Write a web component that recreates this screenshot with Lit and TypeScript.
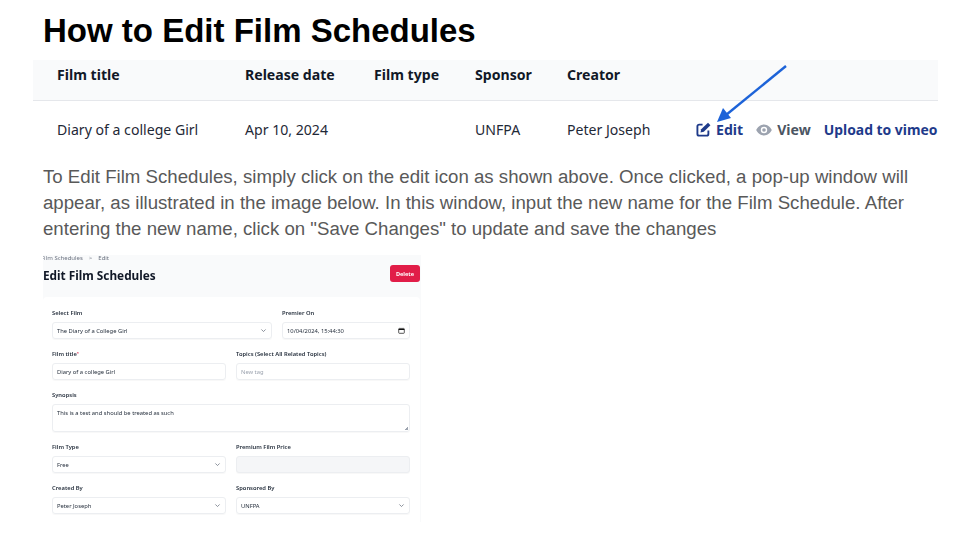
import { LitElement, html, css, svg } from "lit";
import { customElement } from "lit/decorators.js";

const chevron = svg`<svg viewBox="0 0 10 10" width="7" height="7"><path d="M2 3.500 5 6.500 8 3.500" fill="none" stroke="#6b7280" stroke-width="1.100"/></svg>`;

@customElement("app-root")
export class AppRoot extends LitElement {
  static styles = css`
    :host {
      display: block;
      position: relative;
      width: 960px;
      height: 540px;
      background: #fff;
      overflow: hidden;
      font-family: "Liberation Sans", Arial, sans-serif;
    }
    .slide {
      display: flex;
      flex-direction: column;
      padding: 11px 22px 0 33px;
    }
    h1 {
      margin: 0 0 0 10px;
      height: 49px;
      font-size: 33px;
      line-height: 40px;
      font-weight: 700;
      color: #000;
    }
    .table {
      font-family: "Noto Sans", sans-serif;
      font-size: 14.1px;
      color: #1f2937;
    }
    .cols {
      display: grid;
      grid-template-columns: 188px 129px 101px 92px 129px 1fr;
      padding-left: 24px;
      align-items: center;
    }
    .head {
      height: 41px;
      padding-bottom: 12px;
      box-sizing: border-box;
      background: #f9fafb;
      border-bottom: 1px solid #e5e7eb;
      font-weight: 700;
      color: #111827;
    }
    .row {
      height: 58px;
      padding-bottom: 1px;
      box-sizing: border-box;
    }
    .actions {
      display: flex;
      align-items: center;
      font-weight: 700;
      white-space: nowrap;
    }
    .edit, .upload { color: #1e3a8a; }
    .upload { font-size: 13.9px; }
    .view { color: #4b5563; }
    .edit, .view { display: flex; align-items: center; gap: 5px; }
    .edit { margin-right: 13px; }
    .view { margin-right: 13px; }
    p {
      margin: 5px 0 0 10px;
      width: 880px;
      font-size: 18.65px;
      line-height: 26px;
      color: #595959;
    }
    .shot {
      margin: 13px 0 0 10px;
      width: 378px;
      height: 267px;
      overflow: hidden;
      background: #f9fafb;
      font-family: "Noto Sans", sans-serif;
      color: #1f2937;
      display: flex;
      flex-direction: column;
      filter: blur(0.3px);
    }
    .crumbs {
      font-size: 6px;
      line-height: 8px;
      color: #6b7280;
      display: flex;
      gap: 6px;
      margin: -1px 0 0 -2px;
      white-space: nowrap;
    }
    .shot-head {
      display: flex;
      justify-content: space-between;
      align-items: center;
      padding-right: 1px;
      height: 26px;
    }
    .shot-head b {
      font-size: 11.8px;
      color: #111827;
    }
    .delete {
      width: 30px;
      height: 17px;
      margin-top: -3px;
      border-radius: 3px;
      background: #e11d48;
      color: #fff;
      font-size: 5.6px;
      font-weight: 700;
      display: flex;
      align-items: center;
      justify-content: center;
    }
    .card {
      margin: 9px 1px 0 0;
      flex: 1;
      background: #fff;
      border-radius: 4px 4px 0 0;
      padding: 12px 10px 0 9px;
      display: flex;
      flex-direction: column;
      gap: 11px;
    }
    .line { display: grid; grid-template-columns: 174px 1fr; gap: 10px; }
    .line.first { grid-template-columns: 220px 1fr; }
    .field { display: flex; flex-direction: column; gap: 5px; }
    label {
      font-size: 5.8px;
      line-height: 8px;
      font-weight: 600;
      color: #1f2937;
      white-space: nowrap;
    }
    .req { color: #e11d48; font-size: 4px; vertical-align: top; }
    .input {
      box-sizing: border-box;
      height: 17px;
      border: 1px solid #eceef1;
      border-radius: 3px;
      padding: 0 4px;
      font-size: 5.8px;
      display: flex;
      align-items: center;
      justify-content: space-between;
      box-shadow: 0 1px 1px rgba(0, 0, 0, 0.03);
      white-space: nowrap;
    }
    .ph { color: #9ca3af; }
    .off { background: #f5f6f8; }
    .area {
      position: relative;
      height: 28px;
      align-items: flex-start;
      padding-top: 4px;
    }
    .grip {
      position: absolute;
      right: 1px;
      bottom: 1px;
      width: 4px;
      height: 4px;
      background: linear-gradient(135deg, transparent 55%, #9ca3af 55%);
    }
    .arrow {
      position: absolute;
      left: 712px;
      top: 60px;
    }
  `;

  render() {
    return html`
      <div class="slide">
        <h1>How to Edit Film Schedules</h1>
        <div class="table">
          <div class="cols head">
            <span>Film title</span><span>Release date</span><span>Film type</span><span>Sponsor</span><span>Creator</span><span></span>
          </div>
          <div class="cols row">
            <span>Diary of a college Girl</span><span>Apr 10, 2024</span><span></span><span>UNFPA</span><span>Peter Joseph</span>
            <div class="actions">
              <span class="edit">
                <svg viewBox="0 0 16 16" width="15" height="15"><path d="M7 2.800H3.300A1.800 1.800 0 0 0 1.500 4.600v8.100a1.800 1.800 0 0 0 1.800 1.800h8.100a1.800 1.800 0 0 0 1.800-1.800V9" fill="none" stroke="#1e3a8a" stroke-width="2"/><path d="M12.800.8 15.400 3.400 8.300 10.500 4.800 11.200 5.500 7.800Z" fill="#1e3a8a"/></svg>
                Edit
              </span>
              <span class="view">
                <svg viewBox="0 0 16 16" width="16" height="16"><path fill-rule="evenodd" d="M8 2.500c3.600 0 6.500 2.800 7.800 5.500C14.500 10.700 11.600 13.500 8 13.500S1.500 10.700.2 8C1.500 5.300 4.400 2.500 8 2.500Zm0 2.300a3.200 3.200 0 1 0 0 6.400 3.200 3.200 0 0 0 0-6.400Z" fill="#9ca3af"/><circle cx="8" cy="8" r="1.800" fill="#9ca3af"/></svg>
                View
              </span>
              <span class="upload">Upload to vimeo</span>
            </div>
          </div>
        </div>
        <p>To Edit Film Schedules, simply click on the edit icon as shown above. Once clicked, a pop-up window will appear, as illustrated in the image below. In this window, input the new name for the Film Schedule. After entering the new name, click on "Save Changes" to update and save the changes</p>
        <div class="shot">
          <div class="crumbs"><span>Film Schedules</span><span>&gt;</span><span>Edit</span></div>
          <div class="shot-head"><b>Edit Film Schedules</b><span class="delete">Delete</span></div>
          <div class="card">
            <div class="line first">
              <div class="field"><label>Select Film</label><div class="input">The Diary of a College Girl ${chevron}</div></div>
              <div class="field"><label>Premier On</label><div class="input">10/04/2024, 15:44:30
                <svg viewBox="0 0 10 10" width="7" height="7"><rect x="1" y="2" width="8" height="7" rx="1" fill="none" stroke="#111" stroke-width="1"/><path d="M1 3.500H9" stroke="#111" stroke-width="1.500"/></svg>
              </div></div>
            </div>
            <div class="line">
              <div class="field"><label>Film title<span class="req">*</span></label><div class="input">Diary of a college Girl</div></div>
              <div class="field"><label>Topics (Select All Related Topics)</label><div class="input ph">New tag</div></div>
            </div>
            <div class="field"><label>Synopsis</label><div class="input area">This is a test and should be treated as such<span class="grip"></span></div></div>
            <div class="line">
              <div class="field"><label>Film Type</label><div class="input">Free ${chevron}</div></div>
              <div class="field"><label>Premium Film Price</label><div class="input off"></div></div>
            </div>
            <div class="line">
              <div class="field"><label>Created By</label><div class="input">Peter Joseph ${chevron}</div></div>
              <div class="field"><label>Sponsored By</label><div class="input">UNFPA ${chevron}</div></div>
            </div>
          </div>
        </div>
      </div>
      <svg class="arrow" width="80" height="70" viewBox="0 0 80 70">
        <path d="M74 6 14 55" stroke="#1d63d8" stroke-width="2.400" fill="none"/>
        <path d="M5 62 11 48 19 58Z" fill="#1d63d8"/>
      </svg>
    `;
  }
}
